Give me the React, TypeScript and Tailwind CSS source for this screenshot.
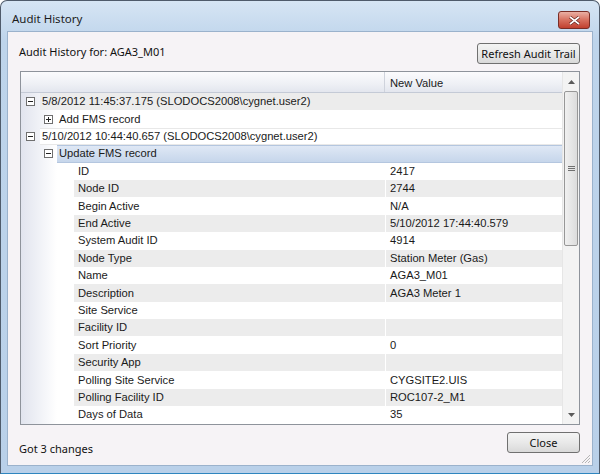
import React from "react";

const props: [string, string][] = [
  ["ID", "2417"],
  ["Node ID", "2744"],
  ["Begin Active", "N/A"],
  ["End Active", "5/10/2012 17:44:40.579"],
  ["System Audit ID", "4914"],
  ["Node Type", "Station Meter (Gas)"],
  ["Name", "AGA3_M01"],
  ["Description", "AGA3 Meter 1"],
  ["Site Service", ""],
  ["Facility ID", ""],
  ["Sort Priority", "0"],
  ["Security App", ""],
  ["Polling Site Service", "CYGSITE2.UIS"],
  ["Polling Facility ID", "ROC107-2_M1"],
  ["Days of Data", "35"],
];

function Toggle({ open }: { open: boolean }) {
  return (
    <svg width="9" height="9" viewBox="0 0 9 9" className="shrink-0">
      <rect x="0.5" y="0.5" width="8" height="8" fill="#fff" stroke="#6f6f6f" />
      <line x1="2" y1="4.5" x2="7" y2="4.5" stroke="#222" />
      {!open && <line x1="4.5" y1="2" x2="4.5" y2="7" stroke="#222" />}
    </svg>
  );
}

function TreeRow({
  level,
  open,
  text,
  variant,
}: {
  level: number;
  open: boolean;
  text: string;
  variant: "gray" | "white" | "lined" | "selected";
}) {
  const bg =
    variant === "gray"
      ? "bg-[#ececec]"
      : variant === "selected"
        ? "bg-[linear-gradient(#dfe8f5,#c6d6eb)] border-y border-[#b4c6df]"
        : variant === "lined"
          ? "bg-white border-y border-[#e8e8e8]"
          : "bg-white";
  return (
    <div className="flex h-[17.4px] shrink-0 items-center">
      <div className={`flex items-center ${level === 0 ? "w-[19px] pl-[5px]" : "w-[36px] pl-[23px]"}`}>
        <Toggle open={open} />
      </div>
      <div className={`flex-1 h-full flex items-center pl-[2px] ${bg}`}>{text}</div>
    </div>
  );
}

function Scrollbar() {
  return (
    <div className="w-[17px] flex flex-col bg-[#f3f3f3] border-l border-[#e6e6e6]">
      <div className="h-[19px] flex items-center justify-center pt-[1px]">
        <svg width="7" height="4" viewBox="0 0 7 4">
          <path d="M0 4 L3.5 0 L7 4 Z" fill="#5a5a5a" />
        </svg>
      </div>
      <div className="h-[155px] mx-[1px] rounded-[2px] border border-[#979797] bg-[linear-gradient(to_right,#f0f0f0,#dcdcdc)] flex items-center justify-center">
        <svg width="7" height="6" viewBox="0 0 7 6">
          <line x1="0" y1="0.5" x2="7" y2="0.5" stroke="#707070" />
          <line x1="0" y1="2.5" x2="7" y2="2.5" stroke="#707070" />
          <line x1="0" y1="4.5" x2="7" y2="4.5" stroke="#707070" />
        </svg>
      </div>
      <div className="flex-1" />
      <div className="h-[18px] flex items-center justify-center">
        <svg width="7" height="4" viewBox="0 0 7 4">
          <path d="M0 0 L3.5 4 L7 0 Z" fill="#5a5a5a" />
        </svg>
      </div>
    </div>
  );
}

export default function App() {
  return (
    <div className="w-[600px] h-[474px] flex flex-col rounded-t-[7px] border border-[#4f5b6b] border-b-[#2f86bf] bg-[linear-gradient(#d6e5f4,#bed4eb_40px,#b9d0e9)] font-['Noto_Sans',sans-serif] text-[11px] text-[#111] overflow-hidden">
      {/* title bar */}
      <div className="h-[30px] shrink-0 flex items-center justify-between pl-[11px] pr-[9px]">
        <span className="text-[11.5px] text-[#1b1b1b] pt-[6px]">Audit History</span>
        <div className="mt-[8px] w-[32px] h-[18px] rounded-[3px] border border-[#7a2d26] bg-[linear-gradient(#eab0a4,#d7705f_50%,#c1402f)] flex items-center justify-center">
          <svg width="11" height="9" viewBox="0 0 11 9">
            <path d="M1 1 L10 8 M10 1 L1 8" stroke="#5b1e18" strokeWidth="3" />
            <path d="M1 1 L10 8 M10 1 L1 8" stroke="#fff" strokeWidth="1.6" />
          </svg>
        </div>
      </div>

      {/* client */}
      <div className="flex-1 mx-[6px] mb-[7px] border border-[#9bb2cc] bg-[#f6f3f6] flex flex-col px-[12px] pt-[11px] relative">
        <div className="flex justify-between items-start h-[21px] shrink-0">
          <span className="ml-[-1px] pt-[2px] leading-[14px] whitespace-nowrap">Audit History for: AGA3_M01</span>
          <button className="w-[103px] h-[21px] rounded-[3px] border border-[#707070] bg-[linear-gradient(#f4f4f4,#e9e9e9_50%,#d9d9d9)] text-[11px] leading-none whitespace-nowrap">
            Refresh Audit Trail
          </button>
        </div>

        <div className="mt-[7px] h-[354px] shrink-0 border border-[#8e939b] flex bg-white overflow-hidden font-['Liberation_Sans',sans-serif] text-[11.2px] text-[#1a1a1a]">
          <div className="flex-1 flex flex-col">
            <div className="h-[21px] shrink-0 flex bg-[linear-gradient(#fbfbfd,#eef0f5_60%,#e3e6ee)] border-b border-[#c4cad6]">
              <div className="w-[364px] border-r border-[#cfd3dc]" />
              <div className="flex-1 flex items-center pl-[5px] pt-[2px]">New Value</div>
            </div>
            <div className="flex-1 flex flex-col bg-[linear-gradient(to_right,#e1e4ee,#ffffff_36px)]">
              <TreeRow level={0} open text="5/8/2012 11:45:37.175 (SLODOCS2008\cygnet.user2)" variant="gray" />
              <TreeRow level={1} open={false} text="Add FMS record" variant="white" />
              <TreeRow level={0} open text="5/10/2012 10:44:40.657 (SLODOCS2008\cygnet.user2)" variant="lined" />
              <TreeRow level={1} open text="Update FMS record" variant="selected" />
              {props.map(([k, v], i) => (
                <div key={k} className="flex h-[17.4px] shrink-0 pl-[53px]">
                  <div className={`w-[311px] flex items-center pl-[4px] ${i % 2 ? "bg-[#ececec]" : "bg-white"}`}>{k}</div>
                  <div className={`flex-1 flex items-center pl-[4px] border-l border-white ${i % 2 ? "bg-[#ececec]" : "bg-white"}`}>{v}</div>
                </div>
              ))}
            </div>
          </div>
          <Scrollbar />
        </div>

        <div className="mt-[7px] h-[21px] shrink-0 flex justify-between items-start">
          <span className="mt-[10px] leading-[14px] ml-[-1px]">Got 3 changes</span>
          <button className="w-[73px] h-[21px] rounded-[3px] border border-[#707070] bg-[linear-gradient(#f4f4f4,#e9e9e9_50%,#d9d9d9)] text-[11px] leading-none">
            Close
          </button>
        </div>

        <svg width="11" height="11" viewBox="0 0 11 11" className="absolute right-[1px] bottom-[1px]">
          <path d="M10 2 L2 10 M10 5 L5 10 M10 8 L8 10" stroke="#b5b5b5" strokeWidth="1" />
        </svg>
      </div>
    </div>
  );
}
